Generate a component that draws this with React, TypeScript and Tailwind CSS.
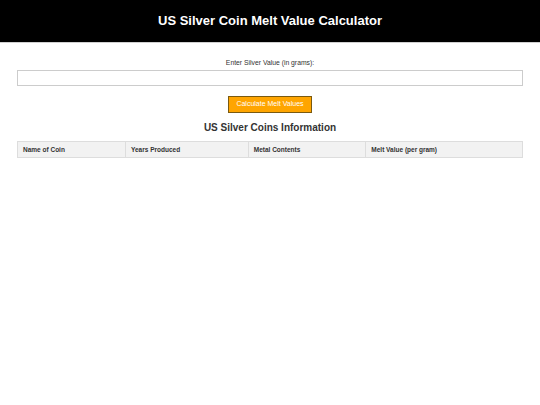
export default function App() {
  const columns = ['Name of Coin', 'Years Produced', 'Metal Contents', 'Melt Value (per gram)']

  return (
    <div className="min-h-[405px] bg-white font-['Liberation_Sans',Arial,sans-serif]">
      {/* Header */}
      <header className="flex h-[43px] items-center justify-center border-b border-[#d0d0d0] bg-black">
        <h1 className="text-[13px] font-bold text-white">US Silver Coin Melt Value Calculator</h1>
      </header>

      <main className="px-[17px] pt-[15px]">
        <label className="block text-center text-[6.8px] text-[#333]">Enter Silver Value (in grams):</label>
        <input
          type="number"
          className="mt-[2px] block h-[16px] w-full border border-[#cccccc] bg-white outline-none"
        />
        <div className="mt-[10px] flex justify-center">
          <button className="h-[17px] w-[84px] border border-[#7a5a10] bg-[#ffa500] text-[7px] text-white">
            Calculate Melt Values
          </button>
        </div>

        <h2 className="mt-[7px] text-center text-[10px] font-bold text-[#333]">US Silver Coins Information</h2>

        <table className="mt-[6px] w-full border-collapse">
          <thead>
            <tr>
              {columns.map((c) => (
                <th
                  key={c}
                  className="h-[16px] border border-[#dddddd] bg-[#f2f2f2] px-[5px] text-left text-[6.5px] font-bold text-[#333]"
                >
                  {c}
                </th>
              ))}
            </tr>
          </thead>
          <tbody />
        </table>
      </main>
    </div>
  )
}
